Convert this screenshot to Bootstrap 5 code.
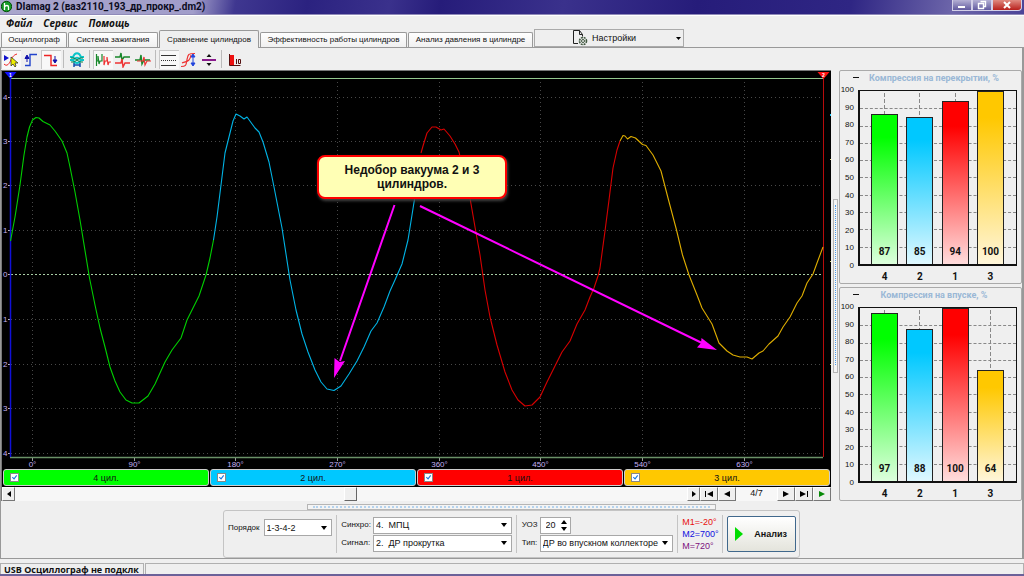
<!DOCTYPE html>
<html lang="ru">
<head>
<meta charset="utf-8">
<meta name="viewport" content="width=device-width, initial-scale=1">
<title>Diamag 2</title>
<link href="https://cdn.jsdelivr.net/npm/bootstrap@5.3.0/dist/css/bootstrap.min.css" rel="stylesheet">
<style>
  body { background: #efefef; color: #111; font-family: "Liberation Sans", Arial, sans-serif; font-size: 9px; line-height: 12px; }
  button, select, input { font: inherit; color: inherit; }
  svg { display: block; }
  .titlebar { height: 15px; padding: 0 2px 0 1px; border-bottom: 1px solid #8f8ab8; background: linear-gradient(100deg, #a9a6cc 0, #a19dca 19%, #3f3790 23%, #2b2280 30%, #3a318c 38%, #261c7a 43%, #3a318c 55%, #261c7a 68%, #2f2684 83%, #6d66aa 93%, #4b4497 100%); }
  .titlebar h1 { font: bold 10px/13px Roboto, Arial, sans-serif; color: #0b0b20; }
  .winbtn { width: 20px; height: 11px; border: 1px solid #d3d0e8; border-top: 0; background: linear-gradient(#b4b0d4, #625b9f); }
  .winbtn-close { width: 30px; background: linear-gradient(#e08a80, #b8201c); border-radius: 0 0 4px 0; }
  .menubar { height: 15px; padding-left: 6px; gap: 11px; border-top: 1px solid #fff; }
  .menubar a { font: italic bold 10px/14px "Open Sans", sans-serif; color: #111; text-decoration: none; }
  .tabrow { height: 18px; padding-left: 1px; border-bottom: 1px solid #999; }
  .tabbtn { height: 15px; border: 1px solid #999; border-bottom: 0; border-radius: 2px 2px 0 0; background: linear-gradient(#fff, #f0f0f0); padding: 0; font-size: 8px; line-height: 14px; white-space: nowrap; margin-right: 1px; }
  .tabbtn.active { height: 18px; background: #efefef; margin-bottom: -1px; line-height: 15px; }
  .w-a { width: 66px; } .w-b { width: 90px; } .w-c { width: 100px; } .w-d { width: 147px; } .w-e { width: 125px; }
  .settings { width: 150px; height: 18px; border: 1px solid #aaa; background: #efefef; padding: 0 2px 0 37px; }
  .frame { border: 1px solid #999; border-top: 0; border-right-width: 2px; }
  .tools { height: 22px; }
  .tool { width: 20px; height: 19px; border: 0; padding: 2px; background: none; }
  .tool.active { background: #f8f8f8; box-shadow: inset 1px 1px #c8c8c8; }
  .toolsep { width: 1px; height: 18px; margin: 0 3px 0 2px; background: #bbb; }
  .scope { background: #000; border-top: 1px solid #777; border-left: 1px solid #777; min-width: 0; }
  .axis-text { font: 8px "Liberation Sans", Arial, sans-serif; fill: #c4b0f4; }
  .callout-note { left: 38%; top: 21%; width: 190px; padding: 6px 20px; border: 2px solid #f00; border-radius: 8px; background: #ffffb5; font-size: 12px; line-height: 14px; font-weight: bold; color: #111; text-align: center; box-shadow: 1px 2px 3px #444; }
  .channels { padding: 0 1px 1px 1px; gap: 1px; height: 18px; }
  .channel { height: 17px; border: 1px solid #ccc; border-radius: 3px; padding-left: 6px; }
  .channel input { appearance: none; width: 9px; height: 9px; margin: 0; border: 1px solid #888; background: #fff url("data:image/svg+xml,%3Csvg xmlns='http://www.w3.org/2000/svg' viewBox='0 0 8 8'%3E%3Cpath d='M1.5 3.5l2 2 3-4' fill='none' stroke='%231a7ae0' stroke-width='1.3'/%3E%3C/svg%3E"); }
  .channel label { padding-right: 15px; }
  .scrollrow { height: 14px; background: #f7f7f7; }
  .stepbtn { width: 18px; height: 14px; padding: 0; border: 1px solid; border-color: #fff #777 #777 #fff; background: #efefef; flex: none; }
  .stepbtn.slim { width: 13px; }
  .thumb { width: 13px; height: 14px; border: 1px solid; border-color: #fff #666 #666 #fff; background: #efefef; margin-left: 49%; }
  .pagenum { width: 41px; }
  .vsplit { width: 8px; }
  .vgrip { width: 5px; height: 174px; margin-top: 129px; border: 1px solid #b5b5b5; background: #f4f4f4; }
  .vdots { border-left: 1px dotted #4ca0f0; height: 160px; margin: 5px 1px; }
  .side { width: 183px; gap: 3px; }
  .chartbox { border: 1px solid #aaa; border-radius: 2px; padding: 2px 3px 0 3px; height: 214px; }
  .charthead { height: 17px; color: #9ab8d6; padding: 0 9px 0 10px; }
  .charthead h2 { font: bold 9px/11px Roboto, Arial, sans-serif; }
  .foldbtn { width: 6px; height: 8px; padding: 0; border: 0; background: linear-gradient(#111, #111) 0 4px / 6px 1px no-repeat; }
  .yaxis { width: 15px; margin: -5px 0; line-height: 10px; font-size: 8px; text-align: right; padding-right: 4px; white-space: nowrap; }
  .yaxis span { direction: rtl; }
  .barplot { display: grid; height: 176px; border: 1px solid #111; border-width: 1px 1px 2px 2px; margin-right: 1px; }
  .gridrows, .bars { grid-area: 1 / 1; min-height: 0; }
  .gridrows i { flex: 1; border-top: 1px dashed #888; }
  .gridrows i:first-child { border-top-color: transparent; }
  .bars { padding: 0 12px 0 11px; }
  .slot { width: 27px; height: 100%; background: repeating-linear-gradient(#efefef 0 2px, transparent 2px 6px), linear-gradient(90deg, transparent 13px, #888 13px, #888 14px, transparent 14px); }
  .valuebar { width: 27px; border: 1px solid #222; border-bottom: 0; padding-bottom: 6px; font: bold 10px/12px Roboto, Arial, sans-serif; }
  .b4 { background: linear-gradient(#0f0 15%, #dfd); } .b2 { background: linear-gradient(#00c8ff 15%, #dff8ff); }
  .b1 { background: linear-gradient(#f00 15%, #ffdcdc); } .b3 { background: linear-gradient(#ffc800 15%, #fff6da); }
  .xaxis { padding: 5px 14px 0 28px; font: bold 10px/12px Roboto, Arial, sans-serif; }
  .xaxis span { width: 27px; text-align: center; }
  .hgrip { width: 409px; height: 6px; margin-top: 3px; border: 1px solid #b5b5b5; background: #f4f4f4; padding: 1px 5px; }
  .hdots { border-top: 2px dotted #b5d3ee; }
  .controls { width: 577px; height: 48px; border: 1px solid #c4c4c4; border-radius: 3px; padding: 0 3px 0 4px; }
  .controls label { font-size: 8px; }
  .vline { width: 1px; height: 38px; background: #c4c4c4; }
  .formgrid { display: grid; grid-template-columns: auto auto; row-gap: 1px; column-gap: 2px; align-items: center; }
  .pick { appearance: none; height: 17px; border: 1px solid #a8a8a8; border-radius: 0; padding: 0 12px 0 2px; background: #fff url("data:image/svg+xml,%3Csvg xmlns='http://www.w3.org/2000/svg' viewBox='0 0 6 4'%3E%3Cpath d='M0 0h6l-3 4z'/%3E%3C/svg%3E") right 4px center / 6px 4px no-repeat; }
  .pick-s { width: 68px; } .pick-l { width: 139px; } .pick-m { width: 133px; }
  .spin { width: 31px; height: 17px; border: 1px solid #a8a8a8; background: #fff; padding: 0 3px; }
  .spin input { width: 16px; border: 0; padding: 0 0 0 2px; appearance: textfield; background: none; }
  .spin input::-webkit-inner-spin-button { display: none; }
  .markers { line-height: 12px; white-space: nowrap; width: 35px; }
  .analyse { width: 69px; height: 36px; border: 1px solid #40688c; border-radius: 2px; background: linear-gradient(#fff, #e4e4dc); padding: 0 8px 0 7px; font-weight: bold; }
  .statusbar { height: 14px; border-bottom: 2px solid #6b6199; padding-top: 1px; gap: 1px; }
  .statuscell { border: 1px solid #b0b0b0; border-bottom: 0; font: bold 9px/12px "Open Sans", sans-serif; white-space: nowrap; }
  .statuscell.first { width: 144px; padding-left: 3px; }
</style>
</head>
<body class="d-flex flex-column min-vh-100">

<header>
  <div class="titlebar d-flex justify-content-between align-items-start">
    <div class="d-flex align-items-center gap-1">
      <svg width="11" height="13" viewBox="0 0 11 13"><circle cx="5.5" cy="6.5" r="5.2" fill="#159a25" stroke="#064d0d"/><path d="M3.5 3v7M3.5 7c1-2 4-2 4 0v3" stroke="#fff" stroke-width="1.3" fill="none"/></svg>
      <h1 class="m-0">DIamag 2 (ваз2110_193_др_прокр_.dm2)</h1>
    </div>
    <div class="d-flex">
      <button class="winbtn p-0" aria-label="Свернуть"><svg width="18" height="10"><path d="M5 6h7v2H5z" fill="#fff"/></svg></button>
      <button class="winbtn p-0" aria-label="Развернуть"><svg width="18" height="10"><path d="M7.500 1.500h5v5h-2M5.500 3.500h5v5h-5z" fill="none" stroke="#fff" stroke-width="1.400"/></svg></button>
      <button class="winbtn winbtn-close p-0" aria-label="Закрыть"><svg width="28" height="10"><path d="M11 2l6 6M17 2l-6 6" stroke="#fff" stroke-width="2"/></svg></button>
    </div>
  </div>
  <nav class="menubar d-flex">
    <a href="#">Файл</a><a href="#">Сервис</a><a href="#">Помощь</a>
  </nav>
  <div class="tabrow d-flex align-items-end" role="tablist">
    <button class="tabbtn w-a" role="tab">Осциллограф</button>
    <button class="tabbtn w-b" role="tab">Система зажигания</button>
    <button class="tabbtn w-c active" role="tab">Сравнение цилиндров</button>
    <button class="tabbtn w-d" role="tab">Эффективность работы цилиндров</button>
    <button class="tabbtn w-e" role="tab">Анализ давления в цилиндре</button>
    <button class="settings d-flex align-items-center">
      <svg width="16" height="16" viewBox="0 0 16 16" fill="none" stroke="#222"><path d="M6 13.500H1.500v-13h6l3 4v2M7.500.500v4h3"/><circle cx="11" cy="11" r="3.500" stroke="#40573f" stroke-width="1.600" stroke-dasharray="2 .8"/><circle cx="11" cy="11" r="1.500" stroke="#40573f"/></svg>
      <span class="ms-1">Настройки</span>
      <svg class="ms-auto" width="5" height="3"><path d="M0 0h5L2.500 3z"/></svg>
    </button>
  </div>
</header>

<main class="frame">
  <div class="tools d-flex align-items-center">
    <button class="tool active" aria-label="Курсор"><svg width="16" height="16" fill="none"><path d="M1 3l5 3-5 3z" fill="#11c"/><path d="M1 12c3 3 5 0 7-4s3-5 6-6" stroke="#e22"/><path d="M8 5v9l2-2 2 3 1-1-1-3h3z" fill="#ee0" stroke="#222" stroke-width=".7"/></svg></button>
    <button class="tool" aria-label="Фронт"><svg width="16" height="16" fill="none"><path d="M2 13.500h5v-11h7" stroke="#24c" stroke-width="1.400"/><path d="M4 4v6M2 6.500L4 3l2 3.500z" stroke="#11a" fill="#11a"/></svg></button>
    <button class="tool active" aria-label="Спад"><svg width="16" height="16" fill="none"><path d="M1 3.500h7v10h6" stroke="#e22" stroke-width="1.400"/><path d="M12 4v6M10 8l2 3 2-3z" stroke="#11a" fill="#11a"/></svg></button>
    <span class="toolsep"></span>
    <button class="tool" aria-label="Наложение"><svg width="16" height="16" fill="none"><path d="M1 5h3c2-5 6-5 8 0h3M1 8h3c2-3 6-3 8 0h3M4 8c2 4 6 4 8 0" stroke="#0bc5ca" stroke-width="2"/><path d="M2 6h3l6 4h3M14 6h-3l-6 4H2" stroke="#167b45"/><path d="M5 11v4M11 11v4M5 13h6" stroke="#1450b0" stroke-width="1.500"/></svg></button>
    <span class="toolsep"></span>
    <button class="tool active" aria-label="Последовательно"><svg width="16" height="16" fill="none"><path d="M1.500 2v12M1 9h2V4l1 8 1-3h2V2" stroke="#17872a" stroke-width="1.200"/><path d="M9 4v9l1-4h2V5l1 8 1-3h2" stroke="#e33" stroke-width="1.200"/></svg></button>
    <button class="tool" aria-label="Друг под другом"><svg width="16" height="16" fill="none"><path d="M0 5h5l1-4 1 7 2-3h6" stroke="#17872a" stroke-width="1.400"/><path d="M0 11h6l1-4 1 8 2-4h5" stroke="#e33" stroke-width="1.400"/></svg></button>
    <button class="tool" aria-label="Совместно"><svg width="16" height="16" fill="none"><path d="M0 8h5l1-5 1 9 2-4h6" stroke="#17872a" stroke-width="1.400"/><path d="M2 9h6l1-4 1 8 2-4h4" stroke="#e33" stroke-width="1.200"/></svg></button>
    <span class="toolsep"></span>
    <button class="tool active" aria-label="Сетка"><svg width="16" height="16" stroke="#333"><path d="M0 3.500h15M0 13.500h15"/><path d="M0 8.500h15" stroke-dasharray="1 1"/></svg></button>
    <button class="tool" aria-label="Масштаб"><svg width="16" height="16" fill="none"><path d="M0 14.500c6 0 5-2 6-7s1-6 8-6M1 11c6-2 8-2 9-8" stroke="#e33" stroke-width="1.200"/><path d="M12 3v10M10 5l2-3 2 3zM10 11l2 3 2-3z" stroke="#24d" fill="#24d"/></svg></button>
    <button class="tool" aria-label="Ноль"><svg width="16" height="16"><path d="M1 7h14v2H1z" fill="#8a1b8d"/><path d="M8 2l2.500 3h-5zM8 14l2.500-3h-5z" fill="#111"/></svg></button>
    <span class="toolsep"></span>
    <button class="tool" aria-label="Гистограмма"><svg width="16" height="16"><path d="M3 3h4v10H3z" fill="#e11"/><path d="M2.500 2v11.500h11M9.500 7v5M11.500 7.500h2v4h-2z" stroke="#511" fill="none"/></svg></button>
  </div>

  <div class="d-flex">
    <section class="scope flex-fill">
      <div class="position-relative">
        <svg width="100%" viewBox="2 71 829 398" fill="none" role="img" aria-label="Осциллограмма давления">
          <g stroke="#484848" stroke-dasharray="1 3">
            <path d="M11 97.500H823M11 141.500H823M11 185.500H823M11 230.500H823M11 319.500H823M11 364.500H823M11 408.500H823M11 453.500H823"/>
            <path d="M32.500 82V457M134.500 82V457M235.500 82V457M337.500 82V457M439.500 82V457M540.500 82V457M642.500 82V457M744.500 82V457"/>
          </g>
          <path d="M11 274.500H823" stroke="#a9cfa6" stroke-dasharray="2 2"/>
          <path d="M10 78.500H823" stroke="#93c78e"/>
          <path d="M10 457.500H823" stroke="#6a9167" stroke-width="1.500"/>
          <path d="M32.500 458v3M134.500 458v3M235.500 458v3M337.500 458v3M439.500 458v3M540.500 458v3M642.500 458v3M744.500 458v3" stroke="#999"/>
          <path d="M8 97.500h3M8 141.500h3M8 185.500h3M8 230.500h3M8 274.500h3M8 319.500h3M8 364.500h3M8 408.500h3M8 453.500h3" stroke="#bbb"/>
          <path d="M10.500 77V457" stroke="#1010d8" stroke-width="1.500"/>
          <path d="M823.500 77V457" stroke="#b80c0c"/>
          <path d="M4.500 72h12l-6 7z" fill="#11f"/><path d="M817.500 72h12l-6 7z" fill="#f11"/>
          <g stroke-width="1.100" stroke-linejoin="round">
            <path stroke="#00cf00" d="M10.500 241L15 217 20 185 24 155 27 137 29.500 127 32.500 120 36 117.500 39 118 43 121.500 50 125 55 131 62 141 67 153 70 167 75 192 80 220 89.500 278 95 305 100 328 105 347 110 367 115 381 120 392 126 400 132 403 139 403 148 396 155 384 165 362 172 350 181 338 187 320 193 308 199 296 206 275 210 258 213.500 240"/>
            <path stroke="#00b4e6" d="M213.500 240L217 217 221 185 225 153 229 137 233 121 236 114 240 116 244 119 247 117 255 128 259 132 263 142 269 162 274 187 282 228 290 280 296 310 302 334 308 352 315 370 321 382 327 389 334 390.500 341 386 349 374 357 361 364 347 371 331 377 323 384 307 390 291 395 280 402 264 408 240 412 215 415 196 418 175 421 155"/>
            <path stroke="#d80000" d="M421 153L423 146 427 133 432 127 436 127 441 130 444 129 450 136 455 144 459 152 463 170 470 198 475 227 480 255 485 290 490 317 497 345 505 372 512 390 518 400 525 406 532 405 540 397 547 382 555 366 562 352 570 341 577 324 585 310 590 297 594 288 598 276 600 268 605 231 609 200 613 168 617 150 620 141"/>
            <path stroke="#dfae00" d="M620 141L623 135.500 625 136 627.500 139 631 136.500 635.500 138 642.500 144.500 646 145.500 653 155 661 171 668 198 676.500 230 682.500 255 689 275 697 295 702 308 712 324 719 343 727 351 733 355 740 357 747 357 752 359 759 353 763 351 769 344 778 336 783 327 790 317 797 303 802 296 807 283 813 274 817 263 823 247"/>
          </g>
          <g stroke="#f0f" stroke-width="2"><path d="M394.500 205L340 361M420 206L702 343"/></g>
          <path d="M334 378L334.500 358 339.500 362 345 361zM717 350L697 347.500 701 343 701.500 338z" fill="#f0f"/>
          <path d="M830.500 114v2" stroke="#2cf"/><path d="M830.500 159v1M830.500 261v1M830.500 364v1" stroke="#dd8"/>
          <g class="axis-text">
            <text x="3" y="100">4</text><text x="3" y="144">3</text><text x="3" y="188">2</text><text x="3" y="233">1</text><text x="3" y="277">0</text><text x="3" y="322">1</text><text x="3" y="367">2</text><text x="3" y="411">3</text><text x="3" y="456">4</text>
            <g text-anchor="middle"><text x="32.500" y="467">0°</text><text x="134.500" y="467">90°</text><text x="235.500" y="467">180°</text><text x="337.500" y="467">270°</text><text x="439.500" y="467">360°</text><text x="540.500" y="467">450°</text><text x="642.500" y="467">540°</text><text x="744.500" y="467">630°</text></g>
          </g>
          <g fill="#fff" font-size="5" font-weight="bold" text-anchor="middle"><text x="10.500" y="77">1</text><text x="823.500" y="77">2</text></g>
        </svg>
        <div class="callout-note position-absolute">Недобор вакуума 2 и 3 цилиндров.</div>
      </div>
      <div class="channels d-flex">
        <div class="channel d-flex align-items-center flex-fill" style="background:#0f0"><input type="checkbox" id="c4" checked><label class="flex-fill text-center" for="c4">4 цил.</label></div>
        <div class="channel d-flex align-items-center flex-fill" style="background:#00c8ff"><input type="checkbox" id="c2" checked><label class="flex-fill text-center" for="c2">2 цил.</label></div>
        <div class="channel d-flex align-items-center flex-fill" style="background:#f00"><input type="checkbox" id="c1" checked><label class="flex-fill text-center" for="c1">1 цил.</label></div>
        <div class="channel d-flex align-items-center flex-fill" style="background:#ffc800"><input type="checkbox" id="c3" checked><label class="flex-fill text-center" for="c3">3 цил.</label></div>
      </div>
      <div class="scrollrow d-flex">
        <button class="stepbtn slim" aria-label="Влево"><svg class="m-auto" width="4" height="6"><path d="M4 0v6L0 3z"/></svg></button>
        <div class="flex-fill"><div class="thumb"></div></div>
        <button class="stepbtn slim" aria-label="Вправо"><svg class="m-auto" width="4" height="6"><path d="M0 0v6l4-3z"/></svg></button>
        <button class="stepbtn" aria-label="Первый"><svg class="m-auto" width="8" height="6"><path d="M0 0h1v6H0zM8 0v6L2 3z"/></svg></button>
        <button class="stepbtn" aria-label="Предыдущий"><svg class="m-auto" width="6" height="6"><path d="M6 0v6L0 3z"/></svg></button>
        <span class="pagenum text-center">4/7</span>
        <button class="stepbtn" aria-label="Следующий"><svg class="m-auto" width="6" height="6"><path d="M0 0v6l6-3z"/></svg></button>
        <button class="stepbtn" aria-label="Последний"><svg class="m-auto" width="8" height="6"><path d="M7 0h1v6H7zM0 0v6l6-3z"/></svg></button>
        <button class="stepbtn" aria-label="Воспроизвести"><svg class="m-auto" width="6" height="6"><path d="M0 0v6l6-3z" fill="#078a07"/></svg></button>
      </div>
    </section>

    <div class="vsplit d-flex justify-content-center"><div class="vgrip"><div class="vdots"></div></div></div>

    <aside class="side d-flex flex-column flex-shrink-0">
      <section class="chartbox">
        <div class="charthead d-flex"><button class="foldbtn" aria-label="Свернуть"></button><h2 class="m-0 flex-fill text-center">Компрессия на перекрытии, %</h2></div>
        <div class="d-flex">
          <div class="yaxis d-flex flex-column justify-content-between"><span>100</span><span>90</span><span>80</span><span>70</span><span>60</span><span>50</span><span>40</span><span>30</span><span>20</span><span>10</span><span>0</span></div>
          <div class="barplot flex-fill">
            <div class="gridrows d-flex flex-column"><i></i><i></i><i></i><i></i><i></i><i></i><i></i><i></i><i></i><i></i></div>
            <div class="bars d-flex justify-content-between">
              <div class="slot d-flex align-items-end"><div class="valuebar b4 d-flex align-items-end justify-content-center" style="height:87%">87</div></div>
              <div class="slot d-flex align-items-end"><div class="valuebar b2 d-flex align-items-end justify-content-center" style="height:85%">85</div></div>
              <div class="slot d-flex align-items-end"><div class="valuebar b1 d-flex align-items-end justify-content-center" style="height:94%">94</div></div>
              <div class="slot d-flex align-items-end"><div class="valuebar b3 d-flex align-items-end justify-content-center" style="height:100%">100</div></div>
            </div>
          </div>
        </div>
        <div class="xaxis d-flex justify-content-between"><span>4</span><span>2</span><span>1</span><span>3</span></div>
      </section>
      <section class="chartbox">
        <div class="charthead d-flex"><button class="foldbtn" aria-label="Свернуть"></button><h2 class="m-0 flex-fill text-center">Компрессия на впуске, %</h2></div>
        <div class="d-flex">
          <div class="yaxis d-flex flex-column justify-content-between"><span>100</span><span>90</span><span>80</span><span>70</span><span>60</span><span>50</span><span>40</span><span>30</span><span>20</span><span>10</span><span>0</span></div>
          <div class="barplot flex-fill">
            <div class="gridrows d-flex flex-column"><i></i><i></i><i></i><i></i><i></i><i></i><i></i><i></i><i></i><i></i></div>
            <div class="bars d-flex justify-content-between">
              <div class="slot d-flex align-items-end"><div class="valuebar b4 d-flex align-items-end justify-content-center" style="height:97%">97</div></div>
              <div class="slot d-flex align-items-end"><div class="valuebar b2 d-flex align-items-end justify-content-center" style="height:88%">88</div></div>
              <div class="slot d-flex align-items-end"><div class="valuebar b1 d-flex align-items-end justify-content-center" style="height:100%">100</div></div>
              <div class="slot d-flex align-items-end"><div class="valuebar b3 d-flex align-items-end justify-content-center" style="height:64%">64</div></div>
            </div>
          </div>
        </div>
        <div class="xaxis d-flex justify-content-between"><span>4</span><span>2</span><span>1</span><span>3</span></div>
      </section>
    </aside>
  </div>

  <div class="hgrip mx-auto"><div class="hdots"></div></div>

  <form class="controls mx-auto d-flex align-items-center justify-content-between">
    <div class="d-flex align-items-center gap-1 align-self-start pt-2">
      <label for="order">Порядок</label>
      <select class="pick pick-s" id="order"><option>1-3-4-2</option></select>
    </div>
    <span class="vline"></span>
    <div class="formgrid">
      <label for="sync">Синхро:</label><select class="pick pick-l" id="sync"><option>4.&nbsp; МПЦ</option></select>
      <label for="signal">Сигнал:</label><select class="pick pick-l" id="signal"><option>2.&nbsp; ДР прокрутка</option></select>
    </div>
    <span class="vline"></span>
    <div class="formgrid">
      <label for="uoz">УОЗ</label>
      <div class="spin d-flex align-items-center justify-content-between"><input type="number" id="uoz" value="20"><svg width="6" height="11"><path d="M0 4l3-4 3 4zM0 7h6l-3 4z"/></svg></div>
      <label for="kind">Тип:</label><select class="pick pick-m" id="kind"><option>ДР во впускном коллекторе</option></select>
    </div>
    <span class="vline"></span>
    <div class="markers"><div style="color:#e81010">M1=-20°</div><div style="color:#1010e0">M2=700°</div><div style="color:#7d107d">M=720°</div></div>
    <span class="vline"></span>
    <button type="button" class="analyse d-flex align-items-center justify-content-between"><svg width="8" height="14"><path d="M0 0v14l8-7z" fill="#0d0"/></svg>Анализ</button>
  </form>
</main>

<footer class="statusbar d-flex mt-auto">
  <div class="statuscell first">USB Осциллограф не подклк</div>
  <div class="statuscell flex-fill"></div>
</footer>

<script src="https://cdn.jsdelivr.net/npm/bootstrap@5.3.0/dist/js/bootstrap.bundle.min.js"></script>
</body>
</html>
